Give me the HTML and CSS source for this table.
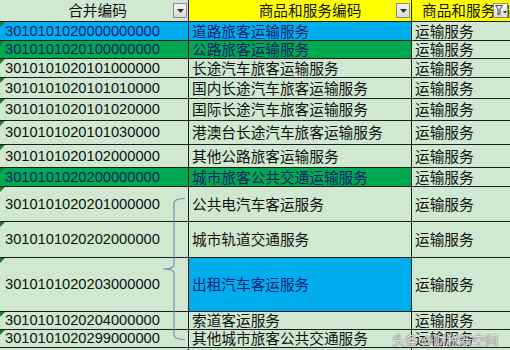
FILE: index.html
```html
<!DOCTYPE html>
<html lang="zh">
<head>
<meta charset="utf-8">
<link rel="stylesheet" href="styles.css">
</head>
<body>
<div class="sheet">
  <div class="grid">
    <div class="cell hd c1"><span class="hd-text">合并编码</span><span class="dd"><svg width="7" height="4" viewBox="0 0 7 4"><path d="M0 0h7L3.5 4z" fill="#333"/></svg></span></div>
    <div class="cell hd c2 yellow"><span class="hd-text">商品和服务编码</span><span class="dd"><svg width="7" height="4" viewBox="0 0 7 4"><path d="M0 0h7L3.5 4z" fill="#333"/></svg></span></div>
    <div class="cell hd c3 yellow"><span class="hd-clip">商品和服务编码</span><span class="dd flt"><svg width="12" height="11" viewBox="0 0 12 11"><path d="M0.5 0.5h7L5 4v5L3 10V4z" fill="none" stroke="#444" stroke-width="1"/><path d="M8 6h4L10 8.5z" fill="#333"/></svg></span></div>

    <div class="cell c1 num blue">3010101020000000000</div>
    <div class="cell c2 blue">道路旅客运输服务</div>
    <div class="cell c3">运输服务</div>

    <div class="cell c1 num green">3010101020100000000</div>
    <div class="cell c2 green">公路旅客运输服务</div>
    <div class="cell c3">运输服务</div>

    <div class="cell c1 num">3010101020101000000</div>
    <div class="cell c2">长途汽车旅客运输服务</div>
    <div class="cell c3">运输服务</div>

    <div class="cell c1 num">3010101020101010000</div>
    <div class="cell c2">国内长途汽车旅客运输服务</div>
    <div class="cell c3">运输服务</div>

    <div class="cell c1 num">3010101020101020000</div>
    <div class="cell c2">国际长途汽车旅客运输服务</div>
    <div class="cell c3">运输服务</div>

    <div class="cell c1 num">3010101020101030000</div>
    <div class="cell c2">港澳台长途汽车旅客运输服务</div>
    <div class="cell c3">运输服务</div>

    <div class="cell c1 num">3010101020102000000</div>
    <div class="cell c2">其他公路旅客运输服务</div>
    <div class="cell c3">运输服务</div>

    <div class="cell c1 num green">3010101020200000000</div>
    <div class="cell c2 green">城市旅客公共交通运输服务</div>
    <div class="cell c3">运输服务</div>

    <div class="cell c1 num">3010101020201000000</div>
    <div class="cell c2">公共电汽车客运服务</div>
    <div class="cell c3">运输服务</div>

    <div class="cell c1 num">3010101020202000000</div>
    <div class="cell c2">城市轨道交通服务</div>
    <div class="cell c3">运输服务</div>

    <div class="cell c1 num">3010101020203000000</div>
    <div class="cell c2 blue">出租汽车客运服务</div>
    <div class="cell c3">运输服务</div>

    <div class="cell c1 num">3010101020204000000</div>
    <div class="cell c2">索道客运服务</div>
    <div class="cell c3">运输服务</div>

    <div class="cell c1 num">3010101020299000000</div>
    <div class="cell c2">其他城市旅客公共交通服务</div>
    <div class="cell c3">运输服务</div>

    <div class="cell c1 tail"></div>
    <div class="cell c2 tail"></div>
    <div class="cell c3 tail"></div>
  </div>

  <svg class="brace" width="30" height="150" viewBox="0 0 30 150">
    <path d="M24 1.5 Q13 1.5 13 6 V68 Q13 72 2 72 Q13 72 13 76 V138 Q13 142.5 24 142.5" fill="none" stroke="#6f8fb8" stroke-width="1.2"/>
  </svg>

  <div class="watermark">头条 @财税新空间</div>
</div>
</body>
</html>
```

FILE: styles.css
```css
html, body {
  margin: 0;
  padding: 0;
  background: #cfe8cf;
}

.sheet {
  position: relative;
  width: 510px;
  height: 350px;
  overflow: hidden;
  background: #cfe8cf;
}

.grid {
  display: grid;
  grid-template-columns: 189px 223px 98px;
  grid-template-rows: 22px 19px 18px 19px 21px 22px 24px 23px 19px 35px 36px 54px 18px 18px 10px;
}

.cell {
  display: flex;
  align-items: center;
  box-sizing: border-box;
  border-right: 1px solid #1e1e1e;
  border-bottom: 1px solid #1e1e1e;
  background: #cfe8cf;
  color: #111;
  font-family: "Noto Sans CJK SC", "Noto Sans", sans-serif;
  font-size: 14.67px;
  line-height: 1;
  white-space: nowrap;
  position: relative;
}

.c1 { padding-left: 5px; }
.c2 { padding-left: 3px; }
.c3 { padding-left: 3px; border-right: none; }

.num {
  font-family: "Liberation Sans", Arial, sans-serif;
  font-size: 14.67px;
}

.num::before {
  content: "";
  position: absolute;
  left: 0;
  top: 0;
  width: 0;
  height: 0;
  border-top: 5px solid #1f7a2e;
  border-right: 5px solid transparent;
}

.blue { background: #00aeef; color: #10206e; }
.green { background: #00a850; color: #10206e; }
.yellow { background: #ffff00; }

.hd {
  justify-content: center;
}

.hd-text {
  flex: 1;
  text-align: center;
}

.c1.hd .hd-text { padding-left: 2px; }
.c2.hd .hd-text { padding-left: 17px; }

.hd-clip {
  flex: 1;
  min-width: 0;
  padding-left: 7px;
  overflow: hidden;
}

.dd {
  position: absolute;
  right: 1px;
  top: 3px;
  width: 14px;
  height: 15px;
  box-sizing: border-box;
  border: 1px solid #8c8c8c;
  background: linear-gradient(#f6f6f6, #d9d9d9);
  display: flex;
  align-items: center;
  justify-content: center;
}

.flt {
  right: 2px;
  width: 15px;
}

.tail { border-bottom: none; }

.brace {
  position: absolute;
  left: 161px;
  top: 197px;
}

.watermark {
  position: absolute;
  left: 392px;
  top: 330px;
  font-family: "Noto Sans CJK SC", sans-serif;
  font-size: 13px;
  color: rgba(255, 255, 255, 0.8);
  text-shadow: 0 0 1px #666, 0 0 1px #666;
  white-space: nowrap;
}
```
